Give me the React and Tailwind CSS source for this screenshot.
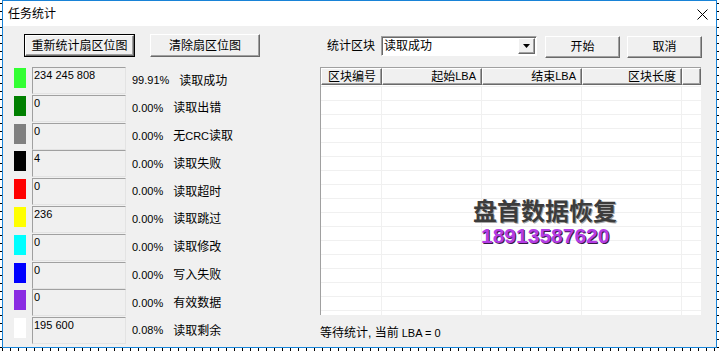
import React from "react";

const rows = [
  ["bg-[#33ff33]", "234 245 808", "99.91%", "读取成功"],
  ["bg-[#008000]", "0", "0.00%", "读取出错"],
  ["bg-[#808080]", "0", "0.00%", "无CRC读取"],
  ["bg-[#000000]", "4", "0.00%", "读取失败"],
  ["bg-[#ff0000]", "0", "0.00%", "读取超时"],
  ["bg-[#ffff00]", "236", "0.00%", "读取跳过"],
  ["bg-[#00ffff]", "0", "0.00%", "读取修改"],
  ["bg-[#0000ff]", "0", "0.00%", "写入失败"],
  ["bg-[#8a2be2]", "0", "0.00%", "有效数据"],
  ["bg-[#ffffff]", "195 600", "0.08%", "读取剩余"],
];

// chinese glyphs are drawn a bit bigger than the latin ones in the dialog font
const Zh = ({ children }) => <span className="text-[12px]">{children}</span>;

const Label = ({ text }) => {
  const parts = text.split(/([A-Za-z]+)/).filter(Boolean);
  return parts.map((p, i) =>
    /[A-Za-z]/.test(p) ? <span key={i}>{p}</span> : <Zh key={i}>{p}</Zh>
  );
};

const Button = ({ children, isDefault, className }) => (
  <div className={`${className} ${isDefault ? "border border-black" : ""} flex`}>
    <div className="flex-1 flex items-center justify-center bg-[#f0f0f0] border-t border-l border-t-white border-l-white border-r border-b border-r-[#696969] border-b-[#696969] shadow-[inset_-1px_-1px_0_#a0a0a0]">
      <Zh>{children}</Zh>
    </div>
  </div>
);

const HeaderCell = ({ children, className }) => (
  <div className={`${className} h-full flex items-center bg-[#f0f0f0] border-t border-l border-t-white border-l-white border-r border-b border-r-[#696969] border-b-[#696969] shadow-[inset_-1px_-1px_0_#a0a0a0]`}>
    {children}
  </div>
);

const Ticks = ({ dir }) =>
  dir === "v" ? (
    <div className="w-[2px] h-full bg-white bg-[repeating-linear-gradient(to_bottom,transparent_0_3px,#000_3px_4px,transparent_4px_8px)]" />
  ) : (
    <div className="h-[3px] w-full bg-white bg-[repeating-linear-gradient(to_right,transparent_0_2px,#000_2px_3px,transparent_3px_8px)]" />
  );

export default function App() {
  return (
    <div className="w-[719px] h-[351px] flex flex-col bg-white text-black text-[11px] font-['Liberation_Sans','Noto_Sans_CJK_SC',sans-serif] overflow-hidden">
      <div className="h-[348px] flex">
        <Ticks dir="v" />
        <div className="w-[715px] h-full flex flex-col border border-[#1883d7]">
          {/* title bar */}
          <div className="h-[25px] bg-white flex items-center justify-between pl-[5px] pr-[8px]">
            <Zh>任务统计</Zh>
            <svg width="11" height="11" viewBox="0 0 11 11" className="mt-[1px]">
              <path d="M0.5 0.5L10.5 10.5M10.5 0.5L0.5 10.5" stroke="#000" strokeWidth="1" />
            </svg>
          </div>

          {/* body */}
          <div className="flex-1 bg-[#f0f0f0] flex pl-[11px] pt-[8px]">
            {/* left column */}
            <div className="w-[306px] flex flex-col">
              <div className="flex ml-[10px] gap-[15px]">
                <Button isDefault className="w-[111px] h-[23px]">重新统计扇区位图</Button>
                <Button className="w-[110px] h-[23px]">清除扇区位图</Button>
              </div>
              <div className="mt-[10px] flex flex-col">
                {rows.map(([color, value, pct, label]) => (
                  <div key={label} className="h-[27.8px] flex items-start">
                    <div className={`${color} w-[12px] h-[20px] mt-[1px]`} />
                    <div className="w-[94px] h-[27px] ml-[6px] border border-t-[#a0a0a0] border-l-[#a0a0a0] border-b-[#e3e3e3] border-r-[#e3e3e3] pl-[1px] pt-[1px] leading-[13px]">
                      {value}
                    </div>
                    <div className="ml-[6px] h-[27px] flex items-center">
                      <span>{pct}</span>
                      <span className="ml-[10px]">
                        <Label text={label} />
                      </span>
                    </div>
                  </div>
                ))}
              </div>
            </div>

            {/* right column */}
            <div className="w-[383px] flex flex-col">
              <div className="h-[24px] flex items-start">
                <div className="ml-[7px] w-[48px] h-[24px] flex items-center">
                  <Zh>统计区块</Zh>
                </div>
                <div className="ml-[6px] mt-[2px] w-[156px] h-[20px] flex items-center bg-white border border-t-[#a0a0a0] border-l-[#a0a0a0] border-b-white border-r-white shadow-[inset_1px_1px_0_#696969]">
                  <div className="flex-1 pl-[2px] leading-none">
                    <Zh>读取成功</Zh>
                  </div>
                  <div className="w-[17px] h-[16px] mr-[1px] flex items-center justify-center bg-[#f0f0f0] border-t border-l border-t-white border-l-white border-r border-b border-r-[#696969] border-b-[#696969] shadow-[inset_-1px_-1px_0_#a0a0a0]">
                    <svg width="7" height="4" viewBox="0 0 7 4">
                      <path d="M0 0H7L3.5 4Z" fill="#000" />
                    </svg>
                  </div>
                </div>
                <Button className="ml-[8px] mt-[2px] w-[75px] h-[22px]">开始</Button>
                <Button className="ml-[7px] mt-[2px] w-[75px] h-[22px]">取消</Button>
              </div>

              {/* list view */}
              <div className="relative mt-[9px] w-[381px] h-[248px] bg-white border-t border-l border-[#a0a0a0] overflow-hidden">
                <div className="h-[17px] flex">
                  <HeaderCell className="w-[61px] pl-[6px]">
                    <Zh>区块编号</Zh>
                  </HeaderCell>
                  <HeaderCell className="w-[100px] justify-end pr-[5px]">
                    <Zh>起始</Zh>LBA
                  </HeaderCell>
                  <HeaderCell className="w-[100px] justify-end pr-[5px]">
                    <Zh>结束</Zh>LBA
                  </HeaderCell>
                  <HeaderCell className="w-[100px] justify-end pr-[5px]">
                    <Zh>区块长度</Zh>
                  </HeaderCell>
                  <HeaderCell className="w-[19px]" />
                </div>
                <div className="mt-[1px] flex flex-col">
                  {Array.from({ length: 17 }).map((_, i) => (
                    <div key={i} className="h-[14px] flex border-t border-[#f0f0f0]">
                      <div className="w-[61px] border-r border-[#f0f0f0]" />
                      <div className="w-[100px] border-r border-[#f0f0f0]" />
                      <div className="w-[100px] border-r border-[#f0f0f0]" />
                      <div className="w-[100px] border-r border-[#f0f0f0]" />
                      <div className="w-[19px]" />
                    </div>
                  ))}
                </div>

                {/* watermark over the list */}
                <div className="absolute left-[152px] top-[130px] h-[24px] text-[24px] leading-[24px] font-bold text-[#3c3c3c] [text-shadow:1px_1px_0_#a8a8a8] font-['Noto_Sans_CJK_SC',sans-serif]">
                  盘首数据恢复
                </div>
                <div className="absolute left-[160px] top-[158px] text-[21px] leading-[20px] font-bold text-[#b43ce6] [text-shadow:1px_1px_0_#3a1a4a] font-['Liberation_Sans',sans-serif]">
                  18913587620
                </div>
              </div>

              <div className="mt-[10px] h-[16px] flex items-center">
                <Zh>等待统计, 当前</Zh>
                <span className="ml-[3px]">LBA = 0</span>
              </div>
            </div>
          </div>
        </div>
        <Ticks dir="v" />
      </div>
      <Ticks dir="h" />
    </div>
  );
}
